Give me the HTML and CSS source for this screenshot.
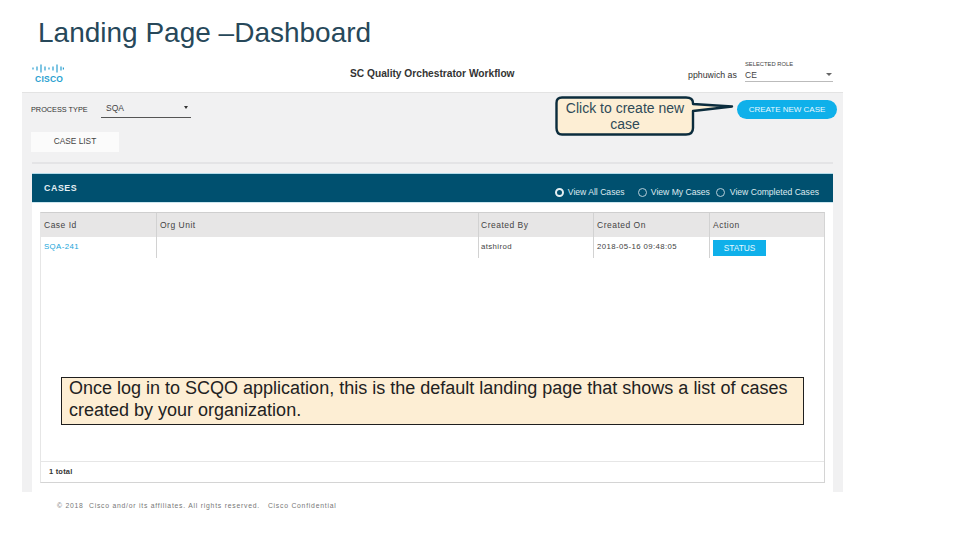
FILE: index.html
```html
<!DOCTYPE html>
<html lang="en">
<head>
<meta charset="utf-8">
<title>Landing Page – Dashboard</title>
<link rel="stylesheet" href="styles.css">
</head>
<body>
<div class="slide">
  <h1 class="slide-title">Landing Page –Dashboard</h1>
  <div class="app">
    <header class="app-header">
      <div class="logo">
        <svg class="logo-bars" width="32" height="9" viewBox="0 0 32 9">
          <g stroke="#2a9fd0" stroke-width="1.2">
            <path d="M1 3.5V5.5M5 2.5V6.5M9 0.5V8.5M13 2.5V6.5M17 3.5V5.5M21 2.5V6.5M25 0.5V8.5M29 2.5V6.5M31.4 3.5V5.5"/>
          </g>
        </svg>
        <span class="logo-text">CISCO</span>
      </div>
      <div class="app-name">SC Quality Orchestrator Workflow</div>
      <div class="user">pphuwich as</div>
      <div class="role">
        <div class="role-label">SELECTED ROLE</div>
        <div class="role-select"><span>CE</span><i class="caret"></i></div>
      </div>
    </header>
    <main class="content">
      <div class="toolbar">
        <div class="process">
          <span class="process-label">PROCESS TYPE</span>
          <div class="process-select"><span>SQA</span><i class="caret dark"></i></div>
        </div>
        <button class="create-btn">CREATE NEW CASE</button>
      </div>
      <div class="tab">CASE LIST</div>
      <div class="divider"></div>
      <section class="panel">
        <div class="panel-head">
          <span class="panel-title">CASES</span>
          <div class="filters">
            <label class="filter first"><i class="radio on"></i>View All Cases</label>
            <label class="filter second"><i class="radio"></i>View My Cases</label>
            <label class="filter last"><i class="radio"></i>View Completed Cases</label>
          </div>
        </div>
        <div class="panel-body">
          <div class="table">
            <div class="row head">
              <div class="cell c1">Case Id</div>
              <div class="cell c2">Org Unit</div>
              <div class="cell c3">Created By</div>
              <div class="cell c4">Created On</div>
              <div class="cell c5">Action</div>
            </div>
            <div class="row data">
              <div class="cell c1 link">SQA-241</div>
              <div class="cell c2"></div>
              <div class="cell c3">atshirod</div>
              <div class="cell c4">2018-05-16 09:48:05</div>
              <div class="cell c5"><span class="status">STATUS</span></div>
            </div>
            <div class="table-space"></div>
            <div class="total">1 total</div>
          </div>
        </div>
      </section>
    </main>
  </div>
  <footer class="legal">© 2018  Cisco and/or its affiliates. All rights reserved.   Cisco Confidential</footer>

  <svg class="callout-shape" width="182" height="42" viewBox="0 0 182 42">
    <path d="M7 1.500H131Q138 1.500 138 7V8L177 10.500 138 15V32Q138 38.500 131 38.500H7Q1.500 38.500 1.500 32V7Q1.500 1.500 7 1.500Z" fill="#fdeed4" stroke="#0b2c3d" stroke-width="2.400" stroke-linejoin="round"/>
  </svg>
  <div class="callout-text">Click to create new case</div>
  <div class="note"><p class="note-text">Once log in to SCQO application, this is the default landing page that shows a list of cases created by your organization.</p></div>
</div>
</body>
</html>
```
FILE: styles.css
```css
* { box-sizing: border-box; }
html, body { margin: 0; padding: 0; background: #fff; }
body { font-family: "Liberation Sans", Arial, sans-serif; }
.slide { position: relative; width: 960px; height: 540px; overflow: hidden; background: #fff; padding-top: 16px; }
.slide-title { margin: 0 0 0 38px; height: 44px; font-size: 28px; line-height: 33px; font-weight: 400; color: #27485a; }

.app { margin-left: 22px; width: 821px; height: 432px; display: flex; flex-direction: column; }
.app-header { height: 33px; flex: none; display: flex; background: #fff; border-bottom: 1px solid #e3e3e3; }
.logo { width: 328px; padding: 4px 0 0 10px; display: flex; flex-direction: column; align-items: flex-start; }
.logo-bars { display: block; }
.logo-text { font-size: 8.500px; line-height: 9px; font-weight: 700; color: #2a9fd0; letter-spacing: 0.25px; margin-left: 3px; margin-top: 2px; }
.app-name { width: 338px; padding-top: 8px; font-size: 10.200px; line-height: 12px; font-weight: 700; color: #333; white-space: nowrap; }
.user { width: 57px; padding-top: 10px; font-size: 8.800px; line-height: 11px; color: #333; white-space: nowrap; }
.role { width: 88px; display: flex; flex-direction: column; }
.role-label { font-size: 5.800px; line-height: 8px; height: 8px; color: #444; }
.role-select { height: 14px; display: flex; justify-content: space-between; align-items: center; font-size: 8.500px; color: #444; border-bottom: 1px solid #bbb; padding-right: 1px; }
.caret { width: 0; height: 0; border-left: 3px solid transparent; border-right: 3px solid transparent; border-top: 3px solid #666; }
.caret.dark { border-top-color: #333; border-left-width: 2.500px; border-right-width: 2.500px; }

.content { flex: 1; background: #f1f1f2; display: flex; flex-direction: column; padding: 0 10px; }
.toolbar { height: 39px; flex: none; display: flex; justify-content: space-between; align-items: flex-start; }
.process { display: flex; align-items: flex-start; padding-top: 8px; margin-left: -1px; }
.process-label { width: 70px; padding-top: 4px; font-size: 7.300px; line-height: 9px; color: #333; white-space: nowrap; }
.process-select { width: 90px; height: 17px; display: flex; justify-content: space-between; padding: 1px 3px 0 5px; font-size: 8.500px; line-height: 13px; color: #444; border-bottom: 1px solid #555; }
.process-select .caret { margin-top: 4px; }
.create-btn { margin: 7px -4px 0 0; width: 100px; height: 19px; padding: 0; border: 0; border-radius: 10px; background: #0fb0ea; color: #e8f8ff; font-family: inherit; font-size: 8px; font-weight: 400; text-align: center; }
.tab { width: 88px; height: 20px; margin-left: -1px; flex: none; background: #fbfbfb; font-size: 8.300px; line-height: 19px; text-align: center; color: #444; }
.divider { height: 2px; margin-top: 10px; flex: none; background: #e4e4e6; }
.panel { flex: 1; margin-top: 9px; display: flex; flex-direction: column; }
.panel-head { height: 30px; flex: none; display: flex; justify-content: space-between; align-items: center; background: #00506f; border-top: 1px solid #b4dcea; border-bottom: 1px solid #cce6ef; padding: 0 14px 0 12px; color: #e6eff3; }
.panel-title { font-size: 8.800px; font-weight: 700; letter-spacing: 0.6px; }
.filters { display: flex; font-size: 8.600px; color: #dfeaf0; padding-top: 8px; }
.filter { display: flex; align-items: center; white-space: nowrap; }
.filter.first { width: 83px; }
.filter.second { width: 78px; }
.radio { width: 9px; height: 9px; border-radius: 50%; border: 1px solid #b6cdd8; margin-right: 4px; flex: none; }
.filter.last .radio { margin-right: 5px; }
.radio.on { background: #00506f; border: 2.500px solid #e4eef2; background-clip: padding-box; }
.panel-body { flex: 1; background: #fff; padding: 9px 8px 9px 8px; display: flex; }
.table { flex: 1; display: flex; flex-direction: column; border: 1px solid #d4d4d4; border-left-color: #e6e6e6; border-top: 1px solid #cfcfcf; }
.row { display: flex; flex: none; }
.row.head { height: 24px; background: #e7e6e6; font-size: 8.500px; color: #444; letter-spacing: 0.5px; }
.row.data { height: 21px; font-size: 7.800px; color: #444; letter-spacing: 0.4px; }
.cell { padding: 7px 0 0 3px; border-right: 1px solid #d2d2d2; }
.row.data .cell { padding-top: 5px; }
.c1 { width: 116px; }
.c2 { width: 322px; }
.c3 { width: 115px; padding-left: 2px; }
.c4 { width: 116px; }
.c5 { flex: 1; border-right: 0; }
.link { color: #20a5da; }
.row.data .c5 { padding: 3px 0 0 3px; }
.status { display: block; width: 53px; height: 16px; background: #0fb0ea; color: #e8f8ff; font-size: 8.300px; line-height: 16px; text-align: center; letter-spacing: 0; }
.table-space { flex: 1; border-bottom: 1px solid #e6e6e6; }
.total { height: 20px; flex: none; padding: 5px 0 0 8px; font-size: 7.500px; line-height: 9px; font-weight: 700; color: #333; letter-spacing: 0.2px; }

.legal { margin: 9px 0 0 57px; font-size: 6.800px; line-height: 10px; color: #777; letter-spacing: 0.77px; white-space: pre; }

.callout-shape { position: absolute; left: 555px; top: 96px; }
.callout-text { position: absolute; left: 557px; top: 100px; width: 136px; font-size: 14px; line-height: 16px; text-align: center; color: #2f4a58; }
.note { position: absolute; left: 61px; top: 377px; width: 743px; height: 48px; padding: 0 7px; background: #fdeed4; border: 1px solid #1f1f1f; }
.note-text { margin: -1px 0 0; font-size: 18px; line-height: 22px; color: #222; }
```
